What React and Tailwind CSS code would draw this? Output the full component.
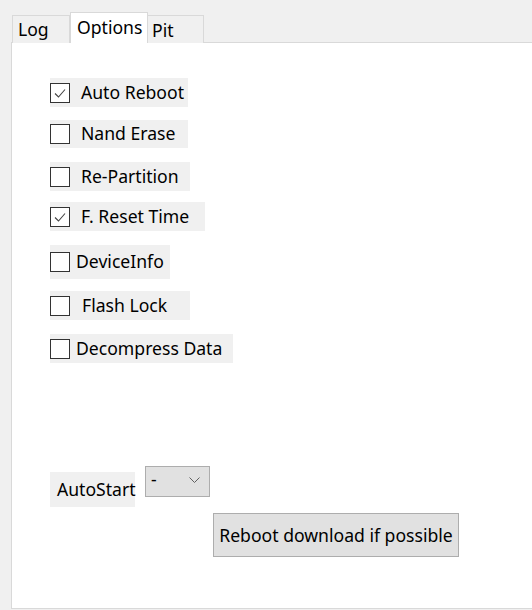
import React from "react";

function Check({ checked }) {
  return (
    <span className="w-5 h-5 border border-[#333333] bg-white flex items-center justify-center shrink-0">
      {checked && (
        <svg width="14" height="14" viewBox="0 0 14 14">
          <path d="M2 7.5 L5.5 11 L12 3.5" fill="none" stroke="#444444" strokeWidth="1.1" />
        </svg>
      )}
    </span>
  );
}

function Option({ label, checked, width, height, gap, mt }) {
  return (
    <div className={`flex items-center bg-[#f0f0f0] ${width} ${height} ${mt}`}>
      <Check checked={checked} />
      <span className={`${gap} text-[17.6px] text-black leading-none`}>{label}</span>
    </div>
  );
}

export default function App() {
  return (
    <div
      className="w-[532px] h-[610px] bg-[#f0f0f0] flex flex-col overflow-hidden"
      style={{ fontFamily: '"Noto Sans", "Open Sans", sans-serif' }}
    >
      <div className="h-[42px] flex items-end pl-[12px] relative z-10">
        <div className="w-[58px] h-[28px] border border-b-0 border-[#d9d9d9] bg-[#f0f0f0] text-[17.6px] pl-[5px] leading-[27px] -mb-px">
          Log
        </div>
        <div className="w-[78px] h-[31px] border border-b-0 border-[#d9d9d9] bg-white text-[17.6px] pl-[6px] leading-[28px] -mb-px">
          Options
        </div>
        <div className="w-[56px] h-[28px] border border-b-0 border-l-0 border-[#d9d9d9] bg-[#f0f0f0] text-[17.6px] pl-[4px] leading-[28px] -mb-px">
          Pit
        </div>
      </div>
      <div className="ml-[11px] w-[530px] h-[567px] border border-[#d9d9d9] bg-white pl-[38px] flex flex-col items-start">
        <Option label="Auto Reboot" checked width="w-[138px]" height="h-[29px]" gap="ml-[11px]" mt="mt-[35px]" />
        <Option label="Nand Erase" width="w-[138px]" height="h-[28px]" gap="ml-[11px]" mt="mt-[13px]" />
        <Option label="Re-Partition" width="w-[140px]" height="h-[29px]" gap="ml-[11px]" mt="mt-[14px]" />
        <Option label="F. Reset Time" checked width="w-[155px]" height="h-[29px]" gap="ml-[11px]" mt="mt-[11px]" />
        <Option label="DeviceInfo" width="w-[120px]" height="h-[34px]" gap="ml-[6px]" mt="mt-[14px]" />
        <Option label="Flash Lock" width="w-[140px]" height="h-[29px]" gap="ml-[12px]" mt="mt-[12px]" />
        <Option label="Decompress Data" width="w-[183px]" height="h-[29px]" gap="ml-[6px]" mt="mt-[14px]" />

        <div className="mt-[103px] flex items-start gap-[10px]">
          <div className="mt-[6px] h-[35px] w-[85px] bg-[#f0f0f0] flex items-center pl-[7px] text-[17.6px]">
            AutoStart
          </div>
          <div className="w-[65px] h-[31px] border border-[#adadad] bg-[#e1e1e1] flex items-start justify-between pl-[5px] pr-[9px] pt-[1px]">
            <span className="text-[17.6px] leading-[22px]">-</span>
            <svg width="11" height="7" viewBox="0 0 11 7" className="mt-[9px]">
              <path d="M0.5 0.5 L5.5 5.5 L10.5 0.5" fill="none" stroke="#606060" strokeWidth="1" />
            </svg>
          </div>
        </div>

        <button className="mt-[6px] ml-[163px] w-[246px] h-[44px] border border-[#adadad] bg-[#e1e1e1] text-[17.6px] text-black flex items-center justify-center">
          Reboot download if possible
        </button>
      </div>
    </div>
  );
}
